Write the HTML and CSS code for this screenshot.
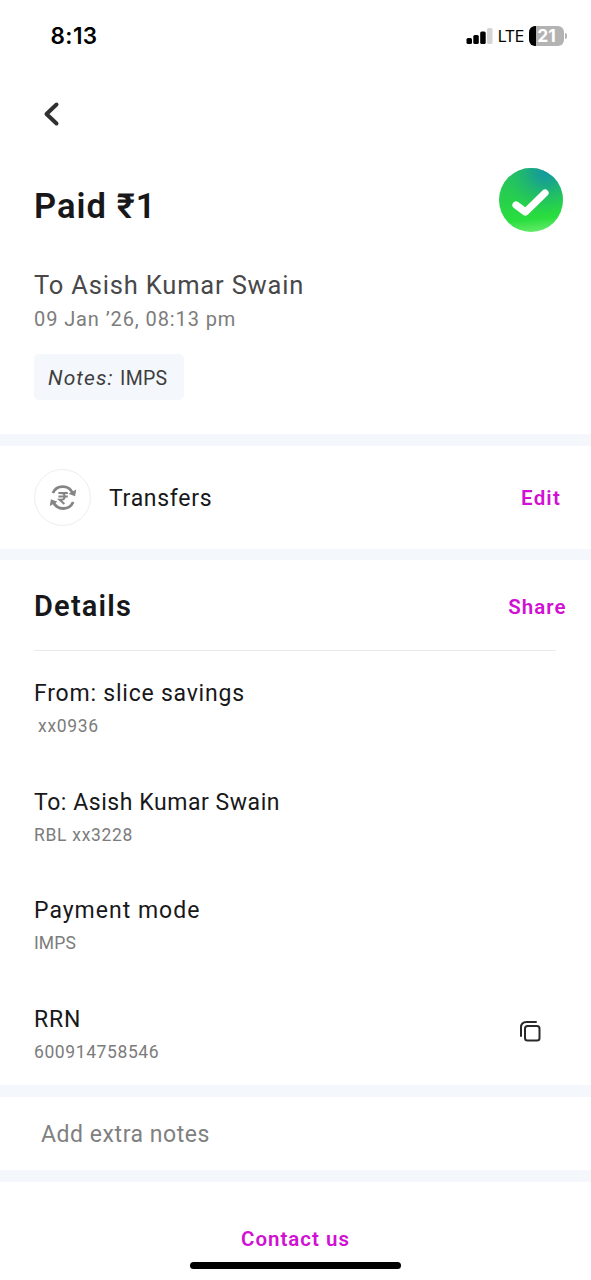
FILE: index.html
```html
<!DOCTYPE html>
<html lang="en">
<head>
<meta charset="utf-8">
<title>Payment details</title>
<link rel="stylesheet" href="styles.css">
</head>
<body>
<div class="screen">
  <header class="status">
    <span class="clock">8:13</span>
    <div class="indicators">
      <svg class="signal" width="28" height="18" viewBox="0 0 28 18">
        <rect x="0.5" y="11" width="5.500" height="6" rx="1.5"/>
        <rect x="7.3" y="8" width="5.500" height="9" rx="1.5"/>
        <rect x="14.2" y="4.5" width="5.500" height="12.5" rx="1.5"/>
        <rect class="off" x="21" y="1" width="5.500" height="16" rx="1.5"/>
      </svg>
      <span class="network">LTE</span>
      <div class="battery"><span class="level">21</span></div>
      <span class="battery-tip"></span>
    </div>
  </header>
  <nav class="nav">
    <svg width="20" height="28" viewBox="0 0 20 28"><path class="chevron" d="M15.500 4.500 5.500 14l10 9.500"/></svg>
  </nav>
  <section class="hero">
    <div class="hero-top">
      <h1 class="amount">Paid ₹1</h1>
      <svg class="success" width="64" height="64" viewBox="0 0 64 64">
        <defs>
          <linearGradient id="base" x1="0.4" y1="0" x2="0.5" y2="1">
            <stop offset="0" stop-color="#27c262"/>
            <stop offset="0.45" stop-color="#27d04c"/>
            <stop offset="0.8" stop-color="#29de3e"/>
            <stop offset="1" stop-color="#62ea68"/>
          </linearGradient>
          <radialGradient id="glow" cx="0.73" cy="0.05" r="0.7">
            <stop offset="0" stop-color="#1297a4"/>
            <stop offset="0.3" stop-color="#169f93" stop-opacity="0.8"/>
            <stop offset="1" stop-color="#22c060" stop-opacity="0"/>
          </radialGradient>
        </defs>
        <circle cx="32" cy="32" r="32" fill="url(#base)"/>
        <circle cx="32" cy="32" r="32" fill="url(#glow)"/>
        <path class="tick" d="M17 37l9.500 7L46 25"/>
      </svg>
    </div>
    <p class="payee">To Asish Kumar Swain</p>
    <p class="date">09 Jan ’26, 08:13 pm</p>
    <p class="note"><em>Notes:</em> <span class="note-value">IMPS</span></p>
  </section>
  <section class="category">
    <span class="badge">
      <svg width="28" height="28" viewBox="0 0 28 28">
        <path class="arc" d="M3.800 9A10.900 10.900 0 0 1 23.500 8.800M24.200 18A10.900 10.900 0 0 1 4.500 18.500"/>
        <path class="head" d="M27.200 5.500l-1.100 6.700-6.600-2.400zM.8 22l1.100-6.700 6.600 2.400z"/>
        <path class="rupee" d="M9.400 9.100h9.400M9.400 12.600h9.400M10 9.100h1.900c5 0 5 6.700 0 6.700H10.600l4.800 4.200"/>
      </svg>
    </span>
    <span class="category-name">Transfers</span>
    <a class="link edit">Edit</a>
  </section>
  <section class="details">
    <div class="details-head">
      <h2 class="title">Details</h2>
      <a class="link share">Share</a>
    </div>
    <div class="row"><div><p class="label">From: slice savings</p><p class="value v-from">xx0936</p></div></div>
    <div class="row"><div><p class="label l-to">To: Asish Kumar Swain</p><p class="value">RBL xx3228</p></div></div>
    <div class="row"><div><p class="label l-mode">Payment mode</p><p class="value v-mode">IMPS</p></div></div>
    <div class="row">
      <div><p class="label">RRN</p><p class="value v-rrn">600914758546</p></div>
      <svg class="copy" width="24" height="24" viewBox="0 0 24 24">
        <rect x="6" y="6" width="14.500" height="14.500" rx="2.500"/>
        <path d="M2 16V7.500Q2 2 7.500 2H17"/>
      </svg>
    </div>
  </section>
  <section class="extra">Add extra notes</section>
  <footer class="footer">
    <a class="link contact">Contact us</a>
    <span class="home"></span>
  </footer>
</div>
</body>
</html>
```

FILE: styles.css
```css
* { box-sizing: border-box; }
body { margin: 0; background: #fff; font-family: Roboto, "Liberation Sans", sans-serif; color: #18181a; }
h1, h2, p { margin: 0; }
svg { display: block; flex: none; }
.screen { width: 591px; height: 1280px; display: flex; flex-direction: column; overflow: hidden; white-space: nowrap; }

.status { height: 71px; padding: 0 24px 0 50.500px; display: flex; align-items: center; justify-content: space-between; color: #000; }
.clock { font: 600 22.500px/30px Inter, sans-serif; letter-spacing: 0.4px; }
.indicators { display: flex; align-items: center; }
.signal .off { fill: #d4d4d4; }
.network { font: 400 16px/20px Inter, sans-serif; margin: 1px 5px 0 4px; letter-spacing: -0.4px; }
.battery { width: 35px; height: 20px; border-radius: 6px; background: linear-gradient(90deg, #000 0 7px, #b3b3b3 7px); }
.level { display: block; text-align: center; font: 700 17.500px/20px Inter, sans-serif; color: #fff; }
.battery-tip { width: 2px; height: 6px; margin-left: 1px; border-radius: 0 2px 2px 0; background: #b3b3b3; }

.nav { height: 97px; padding: 29px 0 0 41px; }
.chevron { fill: none; stroke: #303033; stroke-width: 4; stroke-linecap: round; stroke-linejoin: round; }

.hero { height: 278px; padding: 0 28px 0 34px; border-bottom: 12px solid #f4f7fb; }
.hero-top { display: flex; justify-content: space-between; height: 97px; }
.amount { font-size: 34.500px; line-height: 44px; font-weight: 600; padding-top: 16px; letter-spacing: 1.05px; }
.tick { fill: none; stroke: #fff; stroke-width: 7.200; stroke-linecap: round; stroke-linejoin: round; }
.payee { font-size: 25.500px; line-height: 40px; height: 37px; color: #48484a; letter-spacing: 0.82px; }
.date { font-size: 20px; line-height: 34px; height: 51.500px; color: #7c7c7c; letter-spacing: 0.9px; }
.note { width: 149.500px; height: 46px; line-height: 49px; padding-left: 14px; border-radius: 5px; background: #f4f7fb; color: #3e3e40; font-size: 21px; letter-spacing: 1.1px; }
.note-value { font-size: 19.500px; letter-spacing: 0.3px; }

.category { height: 114px; border-bottom: 11px solid #f4f7fb; padding: 0 30px 0 34px; display: flex; align-items: center; }
.badge { width: 57px; height: 57px; border: 1.500px solid #eee; border-radius: 50%; display: grid; place-items: center; margin-right: 18px; }
.arc, .rupee { fill: none; stroke: #858585; stroke-width: 2.800; }
.rupee { stroke-width: 2; }
.head { fill: #858585; }
.category-name { font-size: 23px; line-height: 30px; letter-spacing: 0.7px; padding-top: 3px; }
.link { color: #d010d3; font-size: 20.500px; font-weight: 600; line-height: 26px; letter-spacing: 1px; }
.edit { margin-left: auto; letter-spacing: 1.2px; }

.details { height: 537px; border-bottom: 12px solid #f4f7fb; padding: 0 24.500px 0 34px; }
.details-head { height: 91px; display: flex; justify-content: space-between; align-items: center; background: linear-gradient(#eaeaec, #eaeaec) left bottom / 522px 1px no-repeat; }
.title { font-size: 29px; line-height: 36px; font-weight: 600; letter-spacing: 1.2px; }
.share { padding-top: 2px; }
.row { height: 108.500px; padding-top: 26px; display: flex; justify-content: space-between; }
.label { font-size: 23px; line-height: 34px; letter-spacing: 0.78px; }
.l-to { letter-spacing: 0.55px; }
.l-mode { letter-spacing: 1px; }
.value { font-size: 17.500px; line-height: 30px; color: #7c7c7c; letter-spacing: 0.7px; }
.v-from { padding-left: 4px; }
.v-mode { letter-spacing: 0.1px; }
.v-rrn { letter-spacing: 0.6px; }
.copy { margin: 17px 23.500px 0 0; fill: none; stroke: #29292b; stroke-width: 2; stroke-linecap: round; }

.extra { height: 85px; border-bottom: 12px solid #f4f7fb; padding: 1px 0 0 41px; font-size: 23px; line-height: 73px; color: #808080; letter-spacing: 0.55px; }
.footer { flex: 1; display: flex; flex-direction: column; align-items: center; padding-top: 44px; }
.home { width: 211px; height: 7px; margin-top: 9.500px; border-radius: 4px; background: #000; }
```
